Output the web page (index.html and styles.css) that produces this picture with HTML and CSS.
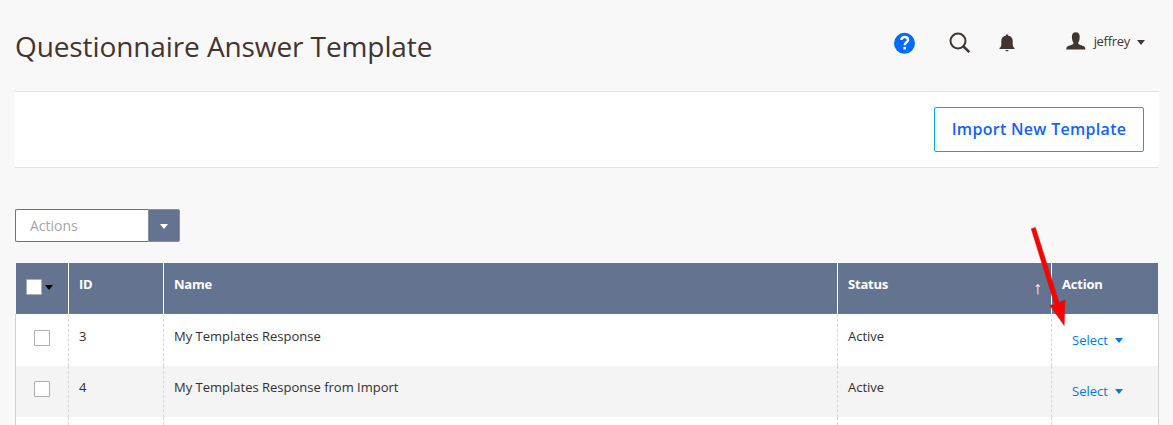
FILE: index.html
```
<!DOCTYPE html>
<html lang="en">
<head>
<meta charset="utf-8">
<meta name="viewport" content="width=device-width, initial-scale=1.0">
<title>Questionnaire Answer Template</title>
<link rel="stylesheet" href="styles.css">
</head>
<body>
<header class="page-header">
  <h1 class="page-title">Questionnaire Answer Template</h1>
  <div class="header-tools">
    <a class="help-icon" title="Help">
      <svg width="22" height="22" viewBox="0 0 22 22"><circle cx="10.500" cy="11.300" r="10.500" fill="#006bff"/><path d="M7.300 8C7.500 6 8.800 5 10.700 5s3.300 1.100 3.300 2.900c0 2.500-3.300 2.600-3.300 5.300" fill="none" stroke="#fff" stroke-width="2.400"/><rect x="9.400" y="14.900" width="2.600" height="2.500" fill="#fff"/></svg>
    </a>
    <a class="search-icon" title="Search">
      <svg width="22" height="22" viewBox="0 0 22 22"><circle cx="9" cy="9" r="7.500" fill="none" stroke="#41362f" stroke-width="2"/><path d="M14.300 14.300l6 5.800" stroke="#41362f" stroke-width="2.600"/></svg>
    </a>
    <a class="bell-icon" title="Notifications">
      <svg width="16" height="18" viewBox="0 0 16 18"><path d="M7 1.600V.4h2v1.200c3.400.6 4.700 2.900 4.700 5.400v3.500c0 1.500.4 2.500 1.800 3.500v.9H.5v-.9c1.400-1 1.800-2 1.800-3.500V7C2.300 4.500 3.600 2.200 7 1.600zM6.300 15.900h3.400c-.3.900-.9 1.300-1.700 1.300s-1.400-.4-1.700-1.300z" fill="#41362f"/></svg>
    </a>
    <a class="user-menu">
      <svg width="20" height="18" viewBox="0 0 20 18"><path d="M9.800.3c2.700 0 4 1.800 3.900 4.600-.1 2.500-.6 4.300-1.400 5.400v1.500c.4.900 2.200 1.300 4.200 1.900 2.100.6 2.800 1.500 2.800 3.900H.3c0-2.400.7-3.300 2.800-3.900 2-.6 3.800-1 4.200-1.900v-1.500C6.500 9.200 6 7.400 5.900 4.900 5.800 2.100 7.100.3 9.800.3z" fill="#41362f"/></svg>
      <span class="user-name">jeffrey</span>
      <i class="caret"></i>
    </a>
  </div>
</header>

<div class="page-actions">
  <button class="button-import">Import New Template</button>
</div>

<div class="mass-actions">
  <span class="mass-label">Actions</span>
  <span class="mass-toggle"><i class="caret"></i></span>
</div>

<table class="data-grid">
  <colgroup>
    <col class="col-check"><col class="col-id"><col class="col-name"><col class="col-status"><col class="col-action">
  </colgroup>
  <thead>
    <tr>
      <th class="cell-multi"><div class="multicheck"><i class="checkbox"></i><i class="caret"></i></div></th>
      <th>ID</th>
      <th>Name</th>
      <th><div class="sorted"><span>Status</span><span class="sort-arrow">↑</span></div></th>
      <th>Action</th>
    </tr>
  </thead>
  <tbody>
    <tr>
      <td class="cell-check"><i class="checkbox"></i></td>
      <td>3</td>
      <td>My Templates Response</td>
      <td>Active</td>
      <td class="cell-action"><a class="select">Select<i class="caret"></i></a></td>
    </tr>
    <tr class="odd">
      <td class="cell-check"><i class="checkbox"></i></td>
      <td>4</td>
      <td>My Templates Response from Import</td>
      <td>Active</td>
      <td class="cell-action"><a class="select">Select<i class="caret"></i></a></td>
    </tr>
    <tr class="last">
      <td></td>
      <td></td>
      <td></td>
      <td></td>
      <td></td>
    </tr>
  </tbody>
</table>

<!-- pointer to the Select menu of the first row -->
<svg class="pointer" width="50" height="110" viewBox="0 0 50 110">
  <path d="M11.200 8.800l4.200-1.400L39.100 82.400l5.900-2.600-.8 25.700L29.700 85.200l4.900-.8z" fill="#f00" stroke="#b22" stroke-width=".5"/>
</svg>
</body>
</html>
```

FILE: styles.css
```
* { box-sizing: border-box; }

body {
  margin: 0;
  padding: 0 14px 0 15px;
  height: 425px;
  overflow: hidden;
  background: #f8f8f8;
  color: #303030;
  font-family: "Open Sans", "Noto Sans", sans-serif;
  font-size: 13px;
  line-height: 18px;
}

svg { display: block; }

.caret {
  display: block;
  width: 0;
  height: 0;
  border: 4px solid transparent;
  border-top: 5px solid #41362f;
  border-bottom: 0;
}

/* header */
.page-header {
  display: flex;
  justify-content: space-between;
  height: 91px;
}
.page-title {
  margin: 27px 0 0;
  color: #41362f;
  font-size: 28px;
  font-weight: 400;
  letter-spacing: -.1px;
  line-height: 38px;
}
.header-tools {
  display: flex;
  align-items: flex-start;
  padding: 32px 14px 0 0;
}
.search-icon { margin-left: 33px; }
.bell-icon { margin: 2px 0 0 28px; }
.user-menu {
  display: flex;
  align-items: center;
  margin-left: 51px;
}
.user-menu .caret { margin-top: 2px; }
.user-name {
  margin: 0 7px 0 8px;
  color: #41362f;
  letter-spacing: -.3px;
}

/* button bar */
.page-actions {
  display: flex;
  justify-content: flex-end;
  height: 77px;
  padding: 15px 15px 0;
  background: #fff;
  border-top: 1px solid #e3e3e3;
  border-bottom: 1px solid #e3e3e3;
}
.button-import {
  width: 210px;
  height: 45px;
  padding: 0 0 2px;
  background: #fff;
  border: 1px solid #00a9e7;
  border-radius: 2px;
  color: #1262ff;
  font: 600 16px "Open Sans", sans-serif;
  letter-spacing: .3px;
  white-space: nowrap;
}

/* mass actions */
.mass-actions {
  display: flex;
  width: 165px;
  height: 33px;
  margin: 41px 0 21px;
}
.mass-label {
  flex: 1;
  padding-left: 14px;
  background: #fff;
  border: 1px solid #64738f;
  border-right: 0;
  border-radius: 2px 0 0 2px;
  color: #a6a6a6;
  font-size: 14px;
  line-height: 31px;
}
.mass-toggle {
  display: flex;
  align-items: center;
  justify-content: center;
  width: 32px;
  padding-top: 1px;
  background: #64738f;
  border: 1px solid #8a8c93;
  border-radius: 0 2px 2px 0;
}
.mass-toggle .caret { border-top-color: #fff; }

/* grid */
.data-grid {
  width: 1144px;
  table-layout: fixed;
  border-collapse: separate;
  border-spacing: 0;
}
.col-check { width: 54px; }
.col-id { width: 95px; }
.col-name { width: 674px; }
.col-status { width: 214px; }
.col-action { width: 107px; }

.data-grid th {
  height: 51px;
  padding: 12px 10px 0;
  background: #64738f;
  background-clip: padding-box;
  border-right: 1px solid #fff;
  color: #fff;
  font-weight: 700;
  letter-spacing: -.2px;
  text-align: left;
  vertical-align: top;
}
.data-grid th:first-child { border-left: 1px solid transparent; }
.data-grid th:last-child { border-right-color: transparent; }

.data-grid td {
  height: 51px;
  padding: 12px 10px 0;
  background: #fff;
  border-right: 1px dashed #d6d6d6;
  vertical-align: top;
}
.data-grid tbody tr:first-child td {
  height: 52px;
  padding-top: 13px;
}
.data-grid .odd td { background: #f4f4f4; }
.data-grid .last td {
  height: 8px;
  padding: 0;
}
.data-grid td:first-child { border-left: 1px solid #d1d1d1; }
.data-grid td:last-child { border-right: 1px solid #d1d1d1; }

.checkbox {
  display: block;
  width: 16px;
  height: 16px;
  background: #fff;
  border: 1px solid #adadad;
  border-radius: 1px;
}
.data-grid .cell-multi { padding: 16px 0 0 10px; }
.multicheck {
  display: flex;
  align-items: center;
  gap: 3px;
}
.multicheck .caret { border-top-color: #000; }
.data-grid .cell-check { padding: 15px 0 0 18px; }
.data-grid tbody tr:first-child .cell-check { padding-top: 16px; }

.sorted {
  display: flex;
  justify-content: space-between;
}
.sort-arrow {
  margin: 4px -1px 0 0;
  font: 18px/18px "Liberation Sans", sans-serif;
}
.data-grid .cell-action { padding: 16px 0 0 20px; }
.data-grid tbody tr:first-child .cell-action { padding-top: 17px; }
.select {
  display: flex;
  align-items: center;
  gap: 7px;
  color: #007bdb;
}
.select .caret { border-top-color: #007bdb; }

.pointer {
  position: absolute;
  left: 1020px;
  top: 220px;
}
```
